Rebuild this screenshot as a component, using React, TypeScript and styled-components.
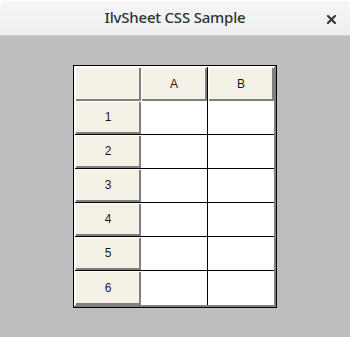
import React from 'react';
import styled, { createGlobalStyle } from 'styled-components';

const GlobalStyle = createGlobalStyle`
  html, body {
    margin: 0;
    padding: 0;
    background: #ffffff;
  }
  * {
    box-sizing: border-box;
  }
`;

const Window = styled.div`
  display: flex;
  flex-direction: column;
  width: 350px;
  height: 337px;
  overflow: hidden;
  border-radius: 7px 7px 0 0;
`;

const TitleBar = styled.div`
  position: relative;
  display: flex;
  align-items: center;
  justify-content: center;
  height: 36px;
  flex-shrink: 0;
  background: linear-gradient(#f5f5f5, #efefef);
  border-bottom: 1px solid #cfcfcf;
  box-shadow: inset 0 1px 0 #ffffff;
`;

const Title = styled.div`
  font-family: 'Noto Sans', 'Open Sans', sans-serif;
  font-size: 15px;
  font-weight: 500;
  color: #2e3436;
  letter-spacing: -0.2px;
  padding-bottom: 2px;
`;

const CloseButton = styled.button`
  position: absolute;
  right: 12px;
  top: 12px;
  display: flex;
  align-items: center;
  justify-content: center;
  width: 14px;
  height: 14px;
  padding: 0;
  border: none;
  background: none;
`;

const Content = styled.div`
  flex: 1;
  display: flex;
  align-items: center;
  justify-content: center;
  background: #bebebe;
`;

const Frame = styled.div`
  border: 1px solid #000000;
`;

const Sheet = styled.div`
  display: grid;
  grid-template-columns: 66px 67px 66px;
  grid-template-rows: repeat(7, 34px);
  border-top: 1px solid #ffffff;
  border-left: 1px solid #ffffff;
  border-right: 2px solid #808080;
  border-bottom: 2px solid #808080;
  background: #ffffff;
`;

const HeaderCell = styled.div<{ lineRight?: boolean; lineBottom?: boolean }>`
  display: flex;
  align-items: center;
  justify-content: center;
  background: #f4f2e7;
  box-shadow: inset 1px 1px 0 #ffffff, inset -2px -2px 0 #808080;
  border-right: ${(p) => (p.lineRight ? '1px solid #000' : 'none')};
  border-bottom: ${(p) => (p.lineBottom ? '1px solid #000' : 'none')};
  font-family: 'Liberation Sans', Arial, sans-serif;
  font-size: 12px;
  color: #1a1a1a;
  padding: 0 0 1px 0;
`;

const DataCell = styled.div<{ lineRight?: boolean; lineBottom?: boolean }>`
  background: #ffffff;
  border-right: ${(p) => (p.lineRight ? '1px solid #000' : 'none')};
  border-bottom: ${(p) => (p.lineBottom ? '1px solid #000' : 'none')};
`;

const columns = ['A', 'B'];
const rows = [1, 2, 3, 4, 5, 6];

export default function App() {
  return (
    <>
      <GlobalStyle />
      <Window>
        <TitleBar>
          <Title>IlvSheet CSS Sample</Title>
          <CloseButton aria-label='close'>
            <svg width='9' height='9' viewBox='0 0 9 9'>
              <path
                d='M1 1 L8 8 M8 1 L1 8'
                stroke='#2e3436'
                strokeWidth='2'
                strokeLinecap='square'
              />
            </svg>
          </CloseButton>
        </TitleBar>
        <Content>
          <Frame>
            <Sheet>
              <HeaderCell />
              {columns.map((col, i) => (
                <HeaderCell key={col} lineRight={i < columns.length - 1}>
                  {col}
                </HeaderCell>
              ))}
              {rows.map((row, r) => (
                <React.Fragment key={row}>
                  <HeaderCell lineBottom={r < rows.length - 1}>{row}</HeaderCell>
                  {columns.map((col, c) => (
                    <DataCell
                      key={col}
                      lineRight={c < columns.length - 1}
                      lineBottom={r < rows.length - 1}
                    />
                  ))}
                </React.Fragment>
              ))}
            </Sheet>
          </Frame>
        </Content>
      </Window>
    </>
  );
}
